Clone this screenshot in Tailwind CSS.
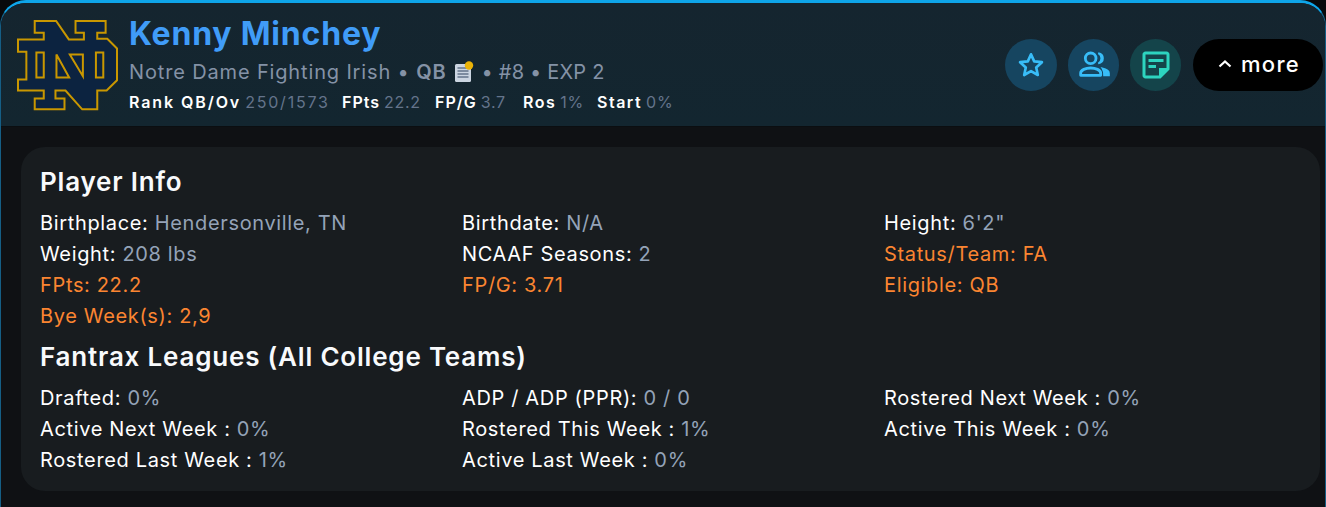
<!DOCTYPE html>
<html>
<head>
    <title>Kenny Minchey</title>
    <meta charset="UTF-8">
    <script src="https://cdn.jsdelivr.net/npm/@tailwindcss/browser@4"></script>
</head>
<body class="bg-[#08090b] font-['Inter','Liberation_Sans',sans-serif]">
    <div class="h-[507px] w-[1326px] overflow-hidden rounded-t-[26px] border-t-[3px] border-x border-t-[#0ea5e9] border-x-[#155e85] bg-[#0f1114]">
        <!-- header -->
        <div class="flex h-[124px] items-start bg-gradient-to-b from-[#15252f] to-[#132630] pl-[16px] pr-[2px] border-b border-[#0b0e11]">
            <svg class="mt-[17px] h-[91px] w-[101px] shrink-0" viewBox="50 60 302 272">
                <path fill="#0c2340" stroke="#c99700" stroke-width="6" d="M103 63H167L205 118H250V98H225V63H315V98H290V116H320L349 145V240L318 271H290V327H245L195 271H165V295H192V327H103V295H130V271H53V238H78V155H53V118H130V98H103Z"/>
                <path fill="#0c2340" stroke="#c99700" stroke-width="6" d="M108 157H130V232H108ZM168 163L206 232H168ZM208 163H247V228ZM286 157H308V232H286Z"/>
            </svg>
            <div class="ml-[11px] flex-1">
                <h1 class="mt-[12px] text-[32px] leading-[38px] font-bold tracking-[0.8px] text-[#409cf8]">Kenny Minchey</h1>
                <div class="mt-[5px] flex items-center text-[20px] leading-[28px] text-[#8492a6]">
                    <span class="tracking-[0.85px]">Notre Dame Fighting Irish • <b class="font-semibold">QB</b></span>
                    <svg class="ml-[8px] mr-[7px] h-[22px] w-[20px]" viewBox="0 0 20 22">
                        <rect x="1" y="3" width="16" height="18" rx="1.500" fill="#cbd5e1"/>
                        <path stroke="#64748b" stroke-width="1.300" d="M3.500 7H14.500M3.500 10H14.500M3.500 13H14.500M3.500 16H14.500"/>
                        <circle cx="15" cy="4.500" r="4.200" fill="#eab308"/>
                    </svg>
                    <span class="tracking-[0.2px]">• #8 • EXP 2</span>
                </div>
                <div class="mt-[5px] flex text-[16px] leading-[22px] tracking-[0.7px]">
                    <span class="flex w-[213px] gap-[4px]"><b class="font-semibold tracking-[1.900px] text-white">Rank QB/Ov</b><span class="tracking-[1.800px] text-[#64748b]">250/1573</span></span>
                    <span class="flex w-[93px] gap-[4px]"><b class="font-semibold tracking-[1px] text-white">FPts</b><span class="text-[#64748b]">22.2</span></span>
                    <span class="flex w-[88px] gap-[4px]"><b class="font-semibold tracking-[1px] text-white">FP/G</b><span class="text-[#64748b]">3.7</span></span>
                    <span class="flex w-[74px] gap-[4px]"><b class="font-semibold tracking-[1.500px] text-white">Ros</b><span class="text-[#64748b]">1%</span></span>
                    <span class="flex gap-[4px]"><b class="font-semibold tracking-[1.500px] text-white">Start</b><span class="text-[#64748b]">0%</span></span>
                </div>
            </div>
            <div class="mt-[36px] flex items-center">
                <button class="flex h-[52px] w-[52px] items-center justify-center rounded-full bg-[#164560]">
                    <svg class="h-[32px] w-[32px]" viewBox="0 0 24 24" fill="none" stroke="#38bdf8" stroke-width="2" stroke-linejoin="round"><path d="M12 4l2.400 5.300 5.800.6-4.300 3.900 1.200 5.700L12 16.600l-5.100 2.900 1.200-5.700-4.300-3.900 5.800-.6z"/></svg>
                </button>
                <button class="ml-[11px] flex h-[52px] w-[51px] items-center justify-center rounded-full bg-[#164560]">
                    <svg class="h-[40px] w-[40px]" viewBox="0 0 24 24" fill="none" stroke="#38bdf8" stroke-width="1.700"><circle cx="10" cy="8" r="3.200"/><path d="M4 18.200v-1.400c0-1.800 3-3 6-3s6 1.200 6 3v1.400z" stroke-linejoin="round"/><path d="M14.600 4.900a3.600 3.600 0 0 1 0 6.200c2-.3 2.800-1.800 2.800-3.100s-.8-2.800-2.800-3.100z" fill="#38bdf8" stroke-width="1"/><path d="M17 14c2 .4 4 1.300 4 3v1.200h-3c0-1.700-.2-3-1-4.200z" fill="#38bdf8" stroke-width="1"/></svg>
                </button>
                <button class="ml-[11px] flex h-[52px] w-[51px] items-center justify-center rounded-full bg-[#14444a]">
                    <svg class="h-[36px] w-[36px]" viewBox="0 0 24 24" fill="#2dd4bf"><path d="M19 5v9h-5v5H5V5h14m0-2H5c-1.100 0-2 .9-2 2v14c0 1.100.9 2 2 2h10l6-6V5c0-1.100-.9-2-2-2zm-7 11H7v-2h5v2zm5-4H7V8h10v2z"/></svg>
                </button>
                <button class="ml-[12px] flex h-[52px] w-[130px] items-center justify-center gap-[7px] rounded-full bg-black pb-[2px] text-[22px] font-medium text-white">
                    <svg class="h-[18px] w-[18px]" viewBox="0 0 18 18" fill="none" stroke="white" stroke-width="2.200"><path d="M3.500 11.500L9 6.500l5.500 5"/></svg>
                    <span class="tracking-[1.300px]">more</span>
                </button>
            </div>
        </div>

        <!-- details card -->
        <div class="ml-[20px] mr-[5px] mt-[20px] h-[344px] rounded-[24px] bg-[#181c1f] pl-[19px] pr-[14px] pt-[16px] text-[20px] leading-[31px] tracking-[0.65px] text-[#94a3b8]">
            <h2 class="text-[26px] leading-[38px] font-semibold tracking-[0.8px] text-[#f8fafc]">Player Info</h2>
            <div class="mt-[7px] grid grid-cols-3">
                <div><span class="text-white">Birthplace:</span> Hendersonville, TN</div>
                <div><span class="text-white">Birthdate:</span> N/A</div>
                <div><span class="text-white">Height:</span> 6'2"</div>
                <div><span class="text-white">Weight:</span> 208 lbs</div>
                <div><span class="text-white">NCAAF Seasons:</span> 2</div>
                <div class="text-[#fb8531]">Status/Team: FA</div>
                <div class="text-[#fb8531]">FPts: 22.2</div>
                <div class="text-[#fb8531]">FP/G: 3.71</div>
                <div class="text-[#fb8531]">Eligible: QB</div>
                <div class="text-[#fb8531]">Bye Week(s): 2,9</div>
            </div>
            <h2 class="mt-[6px] text-[26px] leading-[38px] font-semibold tracking-[0.8px] text-[#f8fafc]">Fantrax Leagues (All College Teams)</h2>
            <div class="mt-[7px] grid grid-cols-3">
                <div><span class="text-white">Drafted:</span> 0%</div>
                <div><span class="text-white">ADP / ADP (PPR):</span> 0 / 0</div>
                <div><span class="text-white">Rostered Next Week :</span> 0%</div>
                <div><span class="text-white">Active Next Week :</span> 0%</div>
                <div><span class="text-white">Rostered This Week :</span> 1%</div>
                <div><span class="text-white">Active This Week :</span> 0%</div>
                <div><span class="text-white">Rostered Last Week :</span> 1%</div>
                <div><span class="text-white">Active Last Week :</span> 0%</div>
            </div>
        </div>
    </div>
</body>
</html>
